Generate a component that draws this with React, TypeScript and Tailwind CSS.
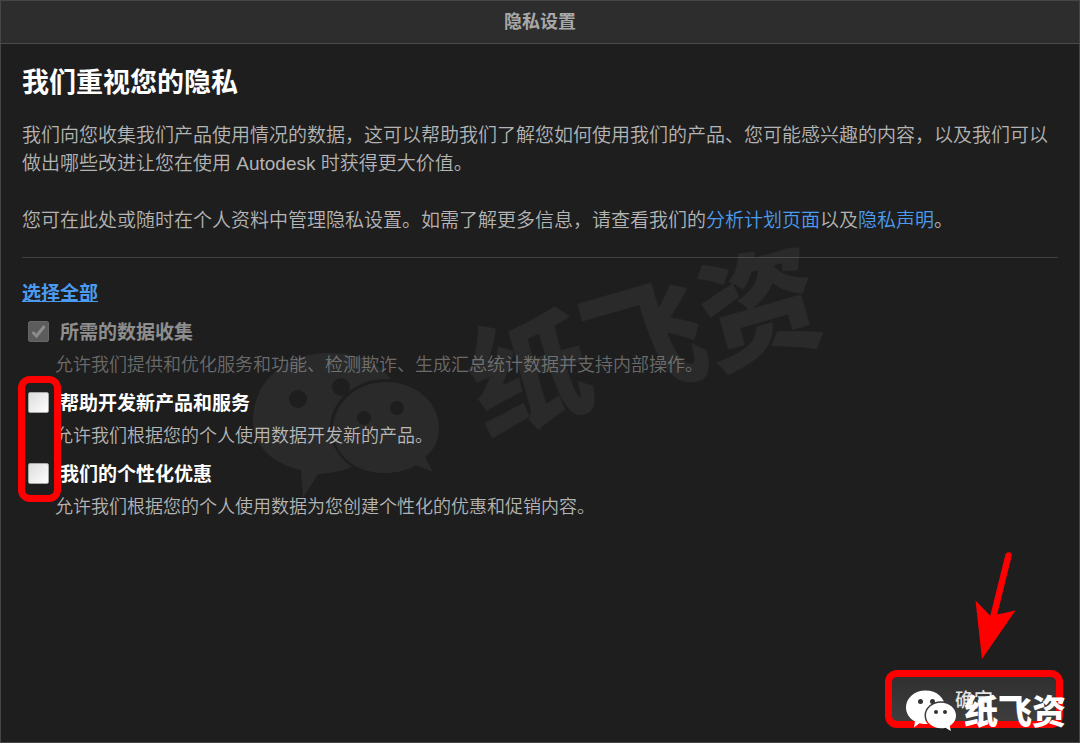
import { useState } from "react";

type Consent = {
  id: string;
  label: string;
  description: string;
  required?: boolean;
};

const requiredConsent: Consent = {
  id: "required",
  label: "所需的数据收集",
  description:
    "允许我们提供和优化服务和功能、检测欺诈、生成汇总统计数据并支持内部操作。",
  required: true,
};

const optionalConsents: Consent[] = [
  {
    id: "develop",
    label: "帮助开发新产品和服务",
    description: "允许我们根据您的个人使用数据开发新的产品。",
  },
  {
    id: "offers",
    label: "我们的个性化优惠",
    description: "允许我们根据您的个人使用数据为您创建个性化的优惠和促销内容。",
  },
];

function ConsentRow({
  consent,
  checked,
  onChange,
}: {
  consent: Consent;
  checked: boolean;
  onChange?: (value: boolean) => void;
}) {
  const { id, label, description, required } = consent;
  return (
    <div>
      <div className="flex h-8 items-center gap-[11px] pl-1.5">
        <span className="grid size-[21px] shrink-0">
          <input
            id={id}
            type="checkbox"
            checked={checked}
            disabled={required}
            aria-describedby={`${id}-description`}
            onChange={(event) => onChange?.(event.target.checked)}
            className="col-start-1 row-start-1 size-[21px] appearance-none rounded-[2px] border border-[#a8a8a8] bg-linear-to-br from-[#dcdcdc] to-white disabled:border-[#666666] disabled:from-[#5c5c5c] disabled:to-[#5c5c5c]"
          />
          {checked && (
            <svg
              viewBox="0 0 21 21"
              className={`pointer-events-none col-start-1 row-start-1 size-[21px] ${required ? "text-[#8c8c8c]" : "text-[#333333]"}`}
              fill="none"
              stroke="currentColor"
              strokeWidth="3"
              aria-hidden="true"
            >
              <path d="M4.5 11 8.5 15 16.5 5" />
            </svg>
          )}
        </span>
        <label
          htmlFor={id}
          className={`pt-1 text-[19px] leading-8 font-bold ${required ? "text-[#8e8e8e]" : "text-white"}`}
        >
          {label}
        </label>
      </div>
      <p
        id={`${id}-description`}
        className={`pt-px pl-[33px] text-[18px] leading-[34px] font-[350] ${required ? "text-[#6a6a6a]" : "text-[#b4b4b4]"}`}
      >
        {description}
      </p>
    </div>
  );
}

function LargeMark() {
  return (
    <div className="pointer-events-none absolute top-[240px] left-[250px] opacity-[0.055]" aria-hidden="true">
      <svg width="190" height="260" viewBox="250 240 190 260" fill="white">
        <mask id="large-mark" maskUnits="userSpaceOnUse" x="250" y="240" width="190" height="260">
          <rect x="250" y="240" width="190" height="260" fill="white" />
          <circle cx="297" cy="398" r="9" fill="black" />
          <circle cx="340" cy="386" r="9" fill="black" />
          <ellipse cx="385" cy="427" rx="56" ry="49" fill="black" />
        </mask>
        <mask id="large-mark-front" maskUnits="userSpaceOnUse" x="250" y="240" width="190" height="260">
          <rect x="250" y="240" width="190" height="260" fill="white" />
          <circle cx="363" cy="417" r="7" fill="black" />
          <circle cx="396" cy="407" r="7" fill="black" />
        </mask>
        <path
          mask="url(#large-mark)"
          d="M252 420C252 380 284 352 329 352 360 352 381 364 391 380L391 450 346 468Q333 472 317 473L302 497 300 469C272 463 252 445 252 420Z"
        />
        <path
          mask="url(#large-mark-front)"
          d="M385 381C414 381 438 401 438 427 438 440 433 449 424 456L432 471 415 464C405 470 395 472 383 472 354 472 332 453 332 428 332 402 356 381 385 381Z"
        />
      </svg>
      <span className="absolute top-[42px] left-[214px] origin-center -rotate-16 text-[120px] leading-none font-black whitespace-nowrap text-white">
        纸飞资
      </span>
    </div>
  );
}

function SmallMark() {
  return (
    <div className="pointer-events-none absolute top-[20px] left-[21px] flex items-start gap-[7px]" aria-hidden="true">
      <svg width="51" height="42" viewBox="906 690 51 42" fill="white" className="shrink-0">
        <mask id="small-mark" maskUnits="userSpaceOnUse" x="900" y="685" width="60" height="50">
          <rect x="900" y="685" width="60" height="50" fill="white" />
          <ellipse cx="941" cy="715.5" rx="16.5" ry="14.3" fill="black" />
        </mask>
        <path
          mask="url(#small-mark)"
          d="M925.5 690.5C937 690.5 945 698 945 707.5 945 717 937 724 925.5 724 923 724 921 723.7 919.5 723.2L914 727.5 915 721.5C909.5 718.5 906 713.5 906 707.5 906 698 914.5 690.5 925.5 690.5Z"
        />
        <path d="M941 702.7C949.5 702.7 956 708.5 956 715.5 956 720 953.5 723.5 949.8 725.8L950.8 731 945.5 727.7Q943.5 728.3 941 728.3C932.5 728.3 926 722.5 926 715.5S932.5 702.7 941 702.7Z" />
        <g fill="#333333">
          <circle cx="920.5" cy="701.5" r="2.5" />
          <circle cx="932.5" cy="701.5" r="2.5" />
          <circle cx="936" cy="712" r="2" />
          <circle cx="945" cy="712" r="2" />
        </g>
      </svg>
      <span className="mt-1 text-[34px] leading-[36px] font-black whitespace-nowrap text-white">
        纸飞资
      </span>
    </div>
  );
}

export default function App() {
  const [choices, setChoices] = useState<Record<string, boolean>>({});

  const selectAll = () =>
    setChoices(Object.fromEntries(optionalConsents.map(({ id }) => [id, true])));

  return (
    <div
      lang="zh-CN"
      className="relative flex min-h-screen flex-col overflow-hidden border border-[#464646] bg-[#1e1e1e] font-['Liberation_Sans','Noto_Sans_CJK_SC',sans-serif]"
    >
      <header className="flex h-[43px] items-center justify-center border-b border-[#4b4b4b] bg-[#2d2d2d] text-[18px] font-bold text-[#a8a8a8]">
        隐私设置
      </header>

      <main className="flex-1 px-[21px] pt-[21px]">
        <h1 className="text-[27px] leading-9 font-bold text-white">我们重视您的隐私</h1>
        <div className="mt-[21px] space-y-[29px] text-[19px] leading-7 font-[350] text-[#b4b4b4]">
          <p>
            我们向您收集我们产品使用情况的数据，这可以帮助我们了解您如何使用我们的产品、您可能感兴趣的内容，以及我们可以做出哪些改进让您在使用
            Autodesk 时获得更大价值。
          </p>
          <p>
            您可在此处或随时在个人资料中管理隐私设置。如需了解更多信息，请查看我们的
            <a href="#analytics" className="text-[#4b9bf0]">分析计划页面</a>
            以及
            <a href="#privacy" className="text-[#4b9bf0]">隐私声明</a>。
          </p>
        </div>
        <hr className="mt-[22px] border-[#404040]" />

        <button
          type="button"
          onClick={selectAll}
          className="mt-[22px] block text-[19px] leading-7 font-bold text-[#4b9bf0] underline"
        >
          选择全部
        </button>

        <div className="mt-[7px] space-y-1">
          <ConsentRow consent={requiredConsent} checked />
          <div className="relative space-y-1">
            {optionalConsents.map((consent) => (
              <ConsentRow
                key={consent.id}
                consent={consent}
                checked={Boolean(choices[consent.id])}
                onChange={(value) =>
                  setChoices((current) => ({ ...current, [consent.id]: value }))
                }
              />
            ))}
            <div className="pointer-events-none absolute -top-[10px] -left-1 h-[126px] w-[43px] rounded-[12px] border-[7px] border-[#ff0000]" />
          </div>
        </div>
      </main>

      <footer className="flex justify-end pr-4 pb-[14px]">
        <div className="relative h-[58px] w-[178px]">
          <button
            type="button"
            className="h-full w-full rounded-[12px] border-[7px] border-[#ff0000] bg-linear-to-b from-[#303030] to-[#3e3e3e] pt-1 text-[19px] font-medium text-[#e4e4e4]"
          >
            确定
          </button>
          <SmallMark />
          <svg
            width="44"
            height="110"
            viewBox="974 550 44 110"
            className="pointer-events-none absolute -top-[120px] left-[89px]"
            aria-hidden="true"
          >
            <path d="M1008.5 555.5 993 618" stroke="#ff0000" strokeWidth="6.5" strokeLinecap="round" />
            <path d="M975.5 600.5 990.5 616 1015.5 610.5 982 659Z" fill="#ff0000" />
          </svg>
        </div>
      </footer>

      <LargeMark />
    </div>
  );
}
